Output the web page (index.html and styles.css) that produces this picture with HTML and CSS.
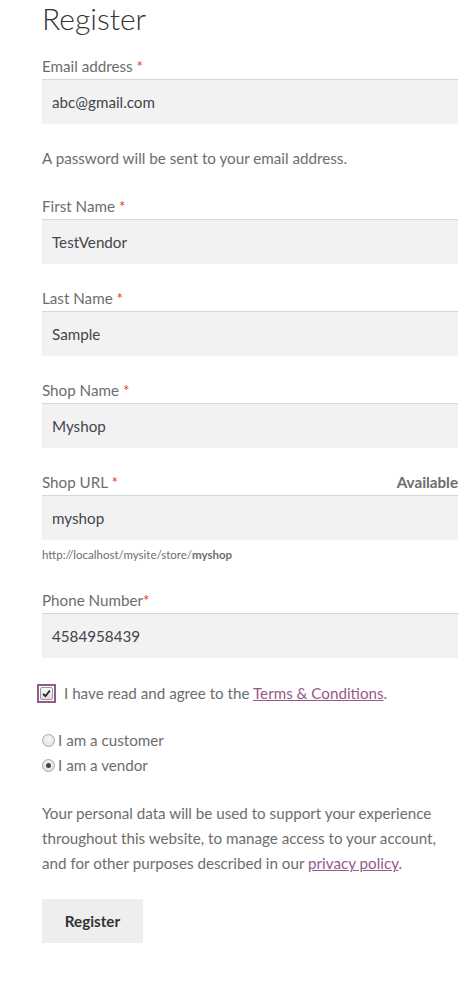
FILE: index.html
```html
<!DOCTYPE html>
<html lang="en">
<head>
<meta charset="utf-8">
<title>Register</title>
<link rel="stylesheet" href="styles.css">
</head>
<body>
<main class="page">
  <h2 class="title">Register</h2>
  <form class="register-form">
    <div class="form-row">
      <label class="label">Email address <span class="required">*</span></label>
      <div class="input">abc@gmail.com</div>
    </div>
    <p class="note">A password will be sent to your email address.</p>
    <div class="form-row">
      <label class="label">First Name <span class="required">*</span></label>
      <div class="input">TestVendor</div>
    </div>
    <div class="form-row">
      <label class="label">Last Name <span class="required">*</span></label>
      <div class="input">Sample</div>
    </div>
    <div class="form-row">
      <label class="label">Shop Name <span class="required">*</span></label>
      <div class="input">Myshop</div>
    </div>
    <div class="form-row form-row-url">
      <div class="label-line">
        <label class="label">Shop URL <span class="required">*</span></label>
        <strong class="available">Available</strong>
      </div>
      <div class="input">myshop</div>
      <small class="url-hint">http://localhost/mysite/store/<strong>myshop</strong></small>
    </div>
    <div class="form-row">
      <label class="label">Phone Number<span class="required">*</span></label>
      <div class="input">4584958439</div>
    </div>
    <div class="terms">
      <span class="checkbox-wrap"><span class="checkbox"><svg class="check" viewBox="0 0 10 10" width="9" height="9"><path d="M1.2 5.4 L3.8 8 L8.8 1.6" fill="none" stroke="#222" stroke-width="2"/></svg></span></span>
      <span class="terms-text">I have read and agree to the <a href="#" class="link">Terms &amp; Conditions</a>.</span>
    </div>
    <div class="roles">
      <div class="role"><span class="radio"></span><span>I am a customer</span></div>
      <div class="role"><span class="radio radio-checked"></span><span>I am a vendor</span></div>
    </div>
    <p class="privacy">Your personal data will be used to support your experience throughout this website, to manage access to your account, and for other purposes described in our <a href="#" class="link">privacy policy</a>.</p>
    <div class="button">Register</div>
  </form>
</main>
</body>
</html>
```

FILE: styles.css
```css
html, body {
  margin: 0;
  padding: 0;
  background: #ffffff;
}

body {
  font-family: Lato, "Liberation Sans", sans-serif;
  font-size: 15.2px;
  color: #6d6d6d;
}

.page {
  padding: 0 13px 0 42px;
}

.title {
  margin: 0;
  font-size: 30px;
  line-height: 36px;
  font-weight: 300;
  color: #333333;
}

.register-form {
  margin-top: 17px;
  display: flex;
  flex-direction: column;
}

.form-row {
  display: flex;
  flex-direction: column;
  margin-bottom: 21px;
}

.label {
  display: block;
  line-height: 26px;
}

.label-line {
  display: flex;
  justify-content: space-between;
  align-items: center;
}

.available {
  font-weight: 700;
  color: #6d6d6d;
  line-height: 26px;
}

.required {
  color: #e2401c;
}

.input {
  height: 45px;
  box-sizing: border-box;
  background: #f2f2f2;
  box-shadow: inset 0 1px 1px rgba(0, 0, 0, 0.125);
  color: #43454b;
  padding: 0 10px;
  display: flex;
  align-items: center;
}

.url-hint {
  display: block;
  font-size: 11.5px;
  line-height: 18px;
  margin-top: 6px;
  margin-bottom: 2px;
  color: #6d6d6d;
}

.url-hint strong {
  font-weight: 700;
}

.note {
  margin: 0 0 22px;
  line-height: 26px;
}

.terms {
  display: flex;
  align-items: center;
  height: 26px;
  margin-top: 1px;
}

.checkbox-wrap {
  box-sizing: border-box;
  width: 19px;
  height: 19px;
  border: 2px solid #96588a;
  margin-left: -5px;
  margin-right: 8px;
  display: flex;
  align-items: center;
  justify-content: center;
}

.checkbox {
  box-sizing: border-box;
  width: 13px;
  height: 13px;
  border: 1px solid #9a9a9a;
  border-radius: 2px;
  background: linear-gradient(#fbfbfb, #dcdcdc);
  display: flex;
  align-items: center;
  justify-content: center;
}

.terms-text {
  line-height: 26px;
}

.link {
  color: #96588a;
  text-decoration: underline;
}

.roles {
  margin-top: 22px;
  display: flex;
  flex-direction: column;
}

.role {
  display: flex;
  align-items: center;
  gap: 3px;
  line-height: 25px;
}

.radio {
  box-sizing: border-box;
  width: 13px;
  height: 13px;
  border-radius: 50%;
  border: 1px solid #a9a9a9;
  background: radial-gradient(circle at 50% 40%, #fafafa, #d9d9d9);
  display: flex;
  align-items: center;
  justify-content: center;
}

.radio-checked::after {
  content: "";
  width: 5px;
  height: 5px;
  border-radius: 50%;
  background: #444;
}

.privacy {
  margin: 23px 0 23px;
  line-height: 25px;
}

.button {
  align-self: flex-start;
  width: 101px;
  height: 44px;
  box-sizing: border-box;
  background: #eeeeee;
  color: #333333;
  font-weight: 700;
  display: flex;
  align-items: center;
  justify-content: center;
}
```
